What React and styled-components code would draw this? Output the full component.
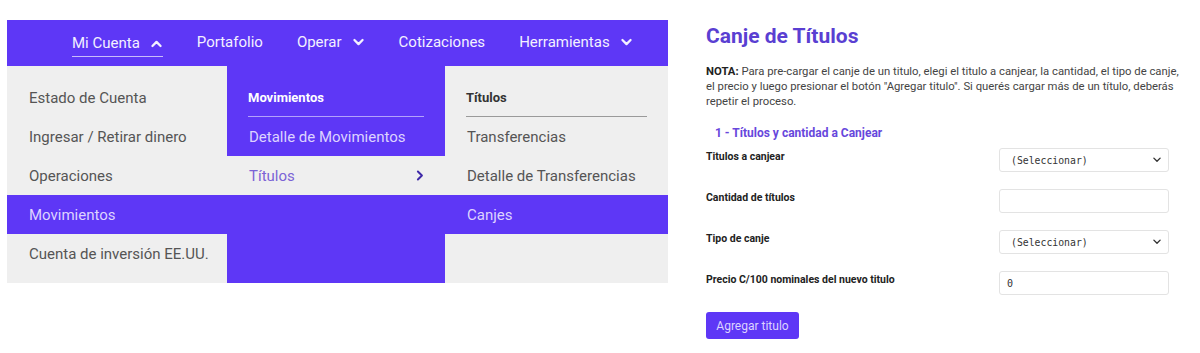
import React from 'react'
import styled, { createGlobalStyle } from 'styled-components'

const purple = '#5e37f6'

const Global = createGlobalStyle`
  body {
    margin: 0;
    background: #fff;
    font-family: Roboto, "Liberation Sans", sans-serif;
  }
`

function Chevron({ dir = 'down', size = 12, color = 'currentColor', width = 2.4 }) {
  const paths = {
    down: 'M3 5l5 5 5-5',
    up: 'M3 11l5-5 5 5',
    right: 'M6 3l5 5-5 5',
  }
  return (
    <svg width={size} height={size} viewBox="0 0 16 16" fill="none">
      <path d={paths[dir]} stroke={color} strokeWidth={width} strokeLinecap="round" strokeLinejoin="round" />
    </svg>
  )
}

export default function App() {
  return (
    <Page>
      <Global />
      <MenuArea>
        <NavBar>
          <NavItem active>Mi Cuenta <Chevron dir="up" size={13} width={2.8} /></NavItem>
          <NavItem>Portafolio</NavItem>
          <NavItem>Operar <Chevron size={13} width={2.8} /></NavItem>
          <NavItem>Cotizaciones</NavItem>
          <NavItem>Herramientas <Chevron size={13} width={2.8} /></NavItem>
        </NavBar>
        <Dropdown>
          <Column>
            <List>
              <Item>Estado de Cuenta</Item>
              <Item>Ingresar / Retirar dinero</Item>
              <Item>Operaciones</Item>
              <Item selected>Movimientos</Item>
              <Item>Cuenta de inversión EE.UU.</Item>
            </List>
          </Column>
          <Column dark>
            <Heading dark>Movimientos</Heading>
            <Item dark>Detalle de Movimientos</Item>
            <Item hovered>
              Títulos
              <Chevron dir="right" size={13} color="#3f2aa8" />
            </Item>
          </Column>
          <Column>
            <Heading>Títulos</Heading>
            <Item>Transferencias</Item>
            <Item>Detalle de Transferencias</Item>
            <Item selected>Canjes</Item>
          </Column>
        </Dropdown>
      </MenuArea>

      <FormArea>
        <Title>Canje de Títulos</Title>
        <Note>
          <b>NOTA:</b> Para pre-cargar el canje de un titulo, elegi el titulo a canjear, la cantidad, el tipo de canje,
          <br />
          el precio y luego presionar el botón "Agregar titulo". Si querés cargar más de un título, deberás
          <br />
          repetir el proceso.
        </Note>
        <Section>1 - Títulos y cantidad a Canjear</Section>
        <Fields>
          <Row>
            <Label>Titulos a canjear</Label>
            <Field>
              <span>(Seleccionar)</span>
              <Chevron size={10} color="#333" width={2.2} />
            </Field>
          </Row>
          <Row>
            <Label>Cantidad de títulos</Label>
            <Field />
          </Row>
          <Row>
            <Label>Tipo de canje</Label>
            <Field>
              <span>(Seleccionar)</span>
              <Chevron size={10} color="#333" width={2.2} />
            </Field>
          </Row>
          <Row>
            <Label>Precio C/100 nominales del nuevo titulo</Label>
            <Field small>0</Field>
          </Row>
        </Fields>
        <Button>Agregar titulo</Button>
      </FormArea>
    </Page>
  )
}

const Page = styled.div`
  display: flex;
  width: 1200px;
  height: 353px;
  overflow: hidden;
`

const MenuArea = styled.div`
  width: 661px;
  padding: 20px 0 0 7px;
  display: flex;
  flex-direction: column;
`

const NavBar = styled.div`
  height: 46px;
  background: ${purple};
  display: flex;
  align-items: center;
  padding-left: 65px;
  gap: 34px;
`

const NavItem = styled.div`
  display: flex;
  align-items: center;
  gap: 8px;
  color: #f3f0ff;
  font-size: 15px;
  height: 24px;
  padding-bottom: 1px;
  border-bottom: 1.5px solid ${p => (p.active ? '#c9bcfa' : 'transparent')};
  margin-top: ${p => (p.active ? '2px' : '0')};
  svg {
    margin-left: 2px;
  }
`

const Dropdown = styled.div`
  display: flex;
  height: 217px;
`

const Column = styled.div`
  width: ${p => (p.dark ? '218px' : '220px')};
  background: ${p => (p.dark ? purple : '#efefef')};
  &:last-child {
    width: 223px;
  }
`

const List = styled.div`
  padding-top: 12px;
`

const Heading = styled.div`
  margin: 0 21px;
  padding-top: 24px;
  height: 26px;
  border-bottom: 1.5px solid ${p => (p.dark ? '#b3a2fb' : '#9a9a9a')};
  font-size: 13px;
  font-weight: 700;
  color: ${p => (p.dark ? '#fff' : '#333')};
`

const Item = styled.div`
  height: 39px;
  display: flex;
  align-items: center;
  justify-content: space-between;
  padding: 0 19px 0 22px;
  font-size: 15px;
  white-space: nowrap;
  color: ${p => (p.selected || p.dark ? '#ddd3ff' : p.hovered ? '#7b63d6' : '#555')};
  background: ${p => (p.selected ? purple : p.hovered ? '#efefef' : 'transparent')};
`

const FormArea = styled.div`
  width: 494px;
  margin-left: 38px;
  padding-top: 24px;
  display: flex;
  flex-direction: column;
`

const Title = styled.h1`
  margin: 0;
  font-size: 21px;
  line-height: 24px;
  font-weight: 700;
  color: #5a3fd2;
`

const Note = styled.p`
  margin: 16px 0 0;
  font-size: 11.3px;
  line-height: 15px;
  color: #444;
  white-space: nowrap;
  b {
    color: #222;
  }
`

const Section = styled.div`
  margin: 17px 0 0 9px;
  font-size: 12px;
  font-weight: 700;
  color: #6747dc;
`

const Fields = styled.div`
  width: 463px;
  display: flex;
  flex-direction: column;
  gap: 17px;
  margin-top: 8px;
`

const Row = styled.div`
  display: flex;
  justify-content: space-between;
  align-items: flex-start;
`

const Label = styled.div`
  font-size: 10.5px;
  font-weight: 700;
  color: #222;
  padding-top: 2px;
`

const Field = styled.div`
  width: 170px;
  height: 24px;
  box-sizing: border-box;
  border: 1px solid #e3e3e3;
  border-radius: 3px;
  background: #fff;
  display: flex;
  align-items: center;
  justify-content: space-between;
  padding: 0 6px 0 ${p => (p.small ? '7px' : '11px')};
  font-family: "DejaVu Sans Mono", "Liberation Mono", monospace;
  font-size: ${p => (p.small ? '10px' : '9.8px')};
  color: #333;
`

const Button = styled.button`
  align-self: flex-start;
  margin-top: 17px;
  width: 93px;
  height: 27px;
  border: none;
  border-radius: 3px;
  background: ${purple};
  color: #ddd3ff;
  font-family: Roboto, "Liberation Sans", sans-serif;
  font-size: 12px;
  padding: 0;
`
